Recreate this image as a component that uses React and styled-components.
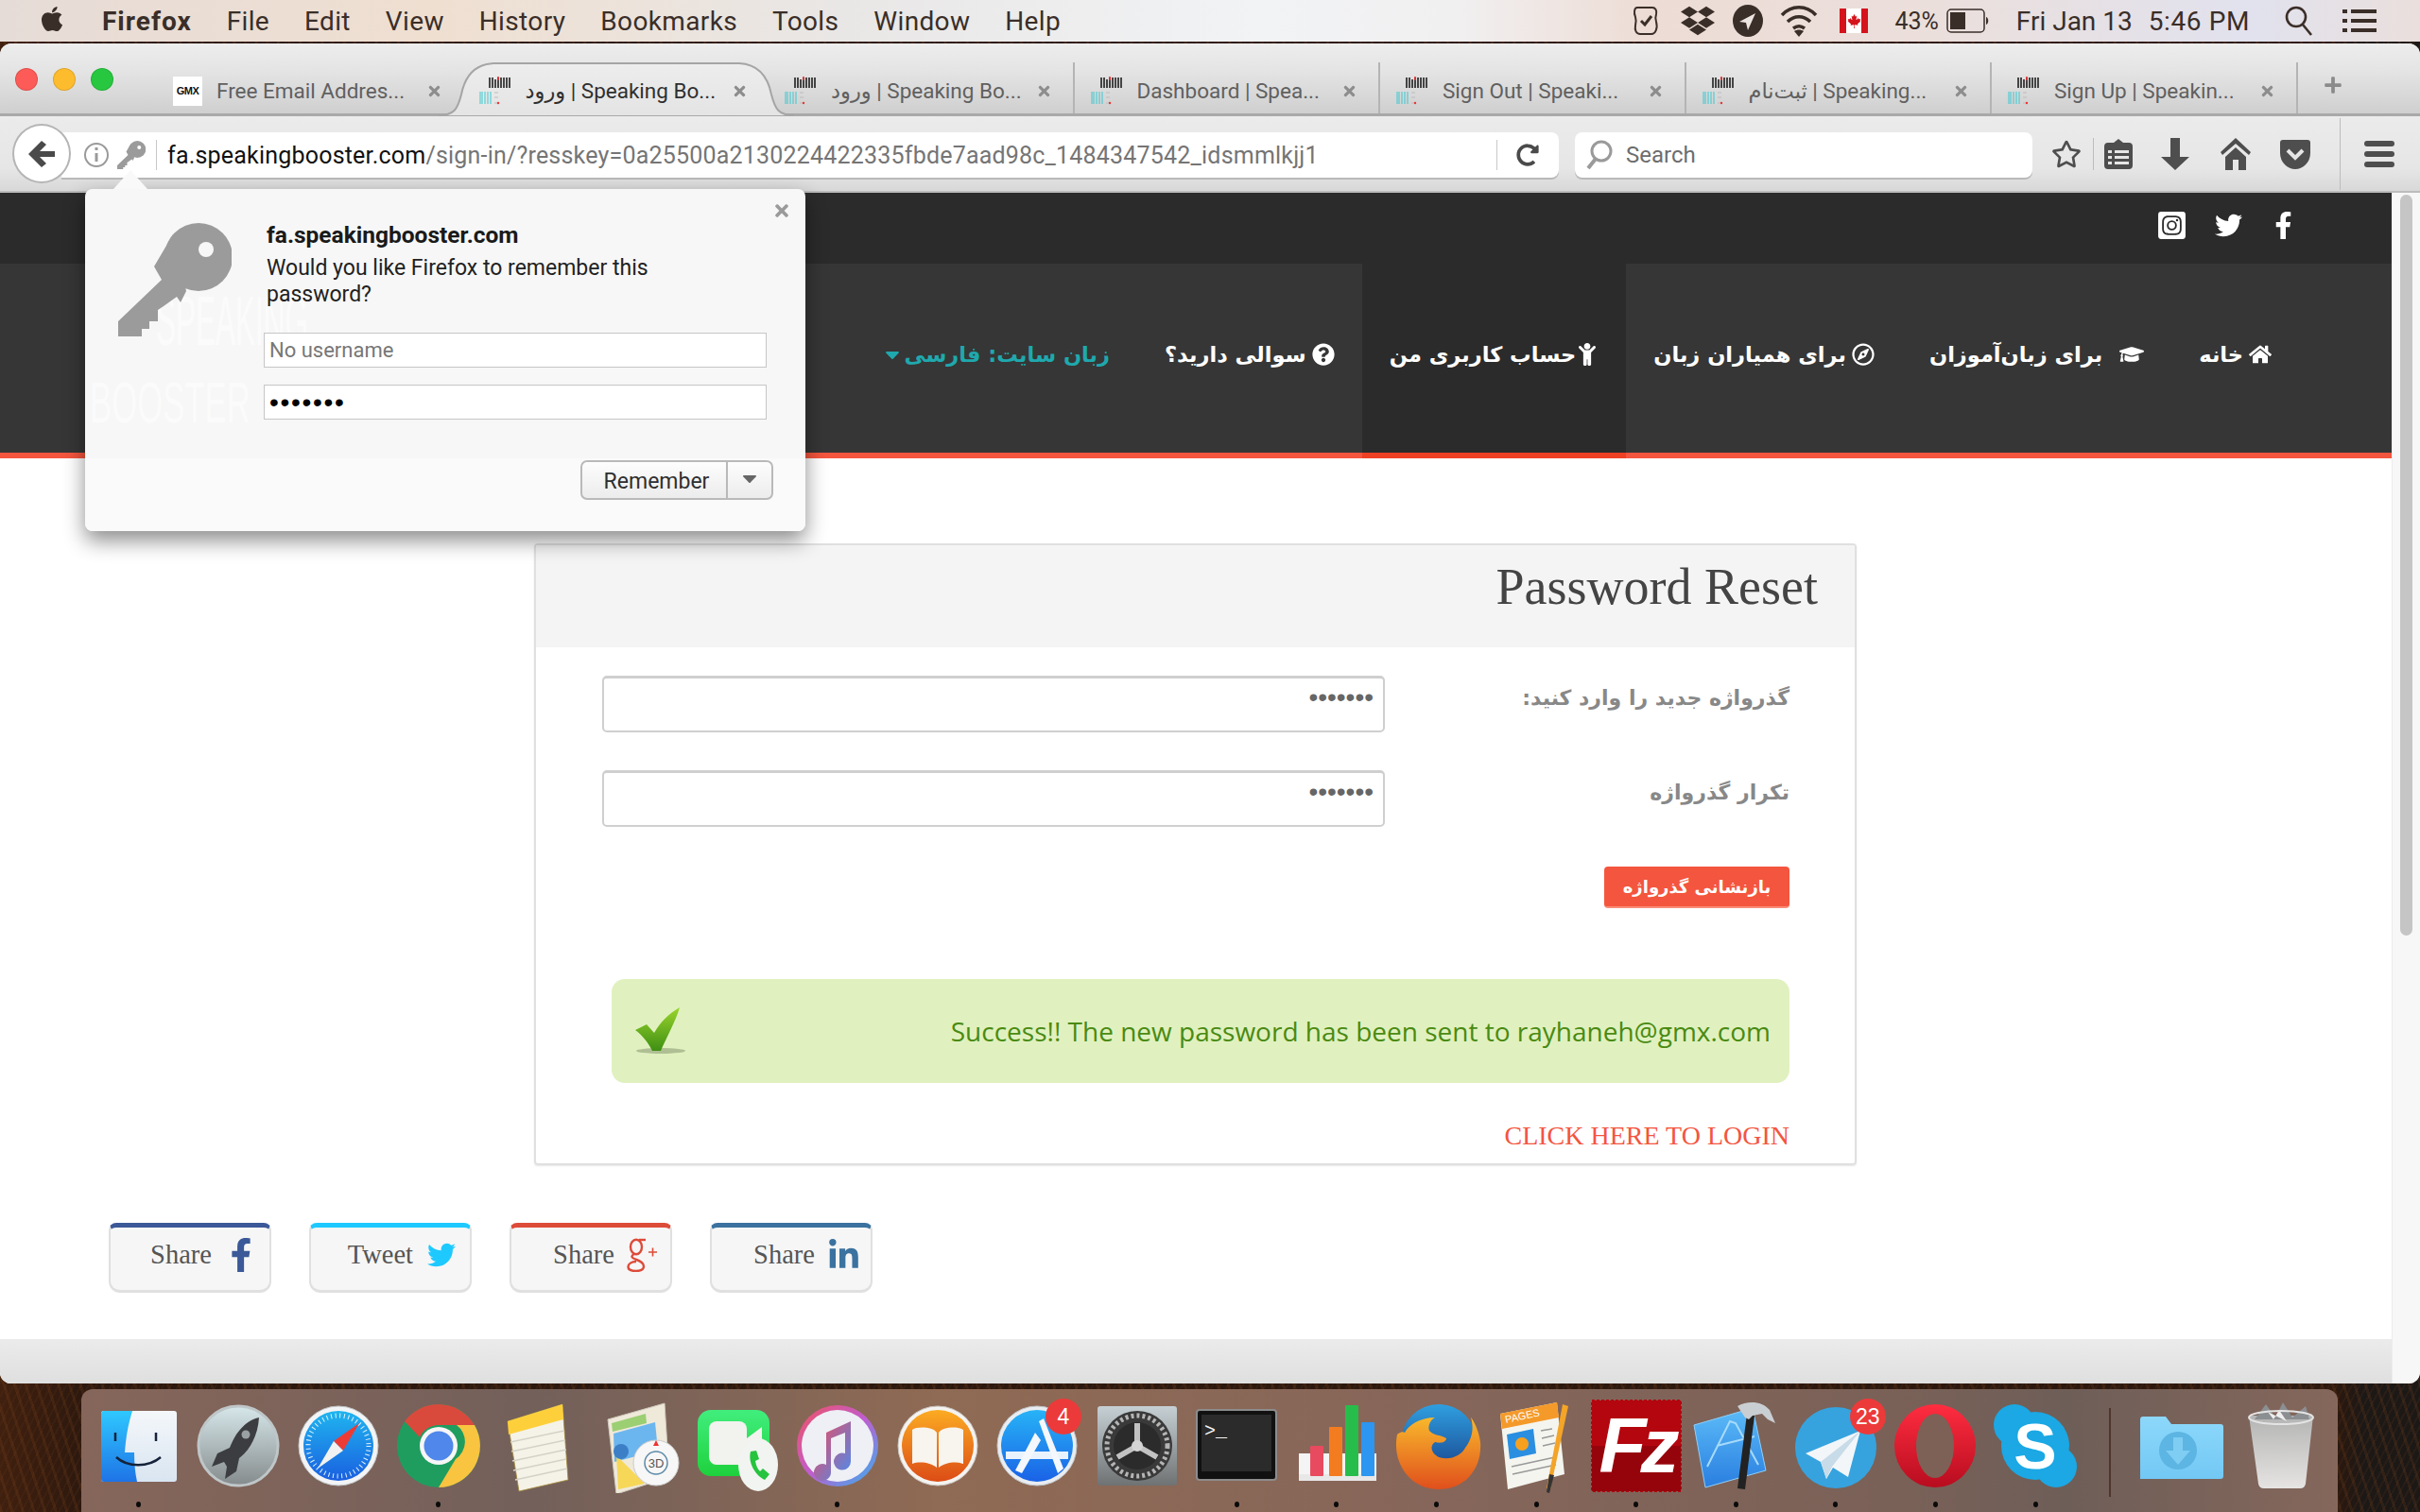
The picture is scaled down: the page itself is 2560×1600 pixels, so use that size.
import React from 'react';
import styled, { createGlobalStyle } from 'styled-components';
import {
  FaApple, FaDropbox, FaCanadianMapleLeaf, FaHome, FaGraduationCap, FaRegCompass, FaChild,
  FaQuestionCircle, FaCaretDown, FaInstagramSquare, FaTwitter, FaFacebookF, FaLinkedinIn,
  FaRegStar, FaRedoAlt, FaTimes, FaPlus,
} from 'react-icons/fa';

const UI_FONT = '"Roboto", "DejaVu Sans", sans-serif';
const FA_FONT = '"DejaVu Sans", sans-serif';
const SERIF = '"Liberation Serif", "DejaVu Serif", serif';

const GlobalStyle = createGlobalStyle`
  html, body { margin: 0; padding: 0; background: #1a1410; }
  * { box-sizing: border-box; }
`;

const Screen = styled.div`
  width: 2560px;
  height: 1600px;
  overflow: hidden;
  display: flex;
  flex-direction: column;
  font-family: ${UI_FONT};
  background:
    repeating-linear-gradient(72deg, rgba(150, 80, 30, 0.16) 0 3px, transparent 3px 11px),
    repeating-linear-gradient(118deg, rgba(90, 50, 25, 0.2) 0 2px, transparent 2px 7px),
    linear-gradient(90deg, #40200f 0, #2c180e 90px, #2c180e 2470px, #1c1816 2500px);
`;

const MenuBar = styled.div`
  height: 44px;
  flex: none;
  display: flex;
  align-items: center;
  padding: 0 46px 0 40px;
  color: #3a2e28;
  font-size: 28px;
  background: linear-gradient(90deg, #e6dcd7 0, #efdfd1 18%, #e9e7e6 35%, #f1f3f5 52%, #f1f0f1 60%, #eddcd5 68%, #ebdfdc 80%, #e1e2ee 93%, #eadfdc 100%);
`;

const MenuItem = styled.span`
  margin-left: ${(p) => p.$ml ?? 37}px;
  font-weight: ${(p) => (p.$bold ? 700 : 400)};
  letter-spacing: ${(p) => (p.$bold ? 1 : 0.35)}px;
`;

const StatusArea = styled.div`
  margin-left: auto;
  display: flex;
  align-items: center;
  height: 100%;
`;

const StatusItem = styled.span`
  display: flex;
  align-items: center;
  margin-left: ${(p) => p.$ml ?? 20}px;
  font-size: ${(p) => p.$size ?? 28}px;
  letter-spacing: ${(p) => p.$track ?? 0}px;
`;

const Flag = styled.span`
  width: 30px;
  height: 26px;
  display: flex;
  align-items: center;
  justify-content: center;
  color: #d5131b;
  font-size: 15px;
  background: linear-gradient(90deg, #d5131b 0 7px, #fff 7px 23px, #d5131b 23px);
`;

const BrowserWindow = styled.div`
  position: relative;
  height: 1418px;
  margin-top: 2px;
  flex: none;
  display: flex;
  flex-direction: column;
  border-radius: 12px;
  overflow: hidden;
  background: #e4e4e4;
`;

const TabStrip = styled.div`
  height: 77px;
  flex: none;
  display: flex;
  align-items: stretch;
  padding: 20px 0 0 166px;
  position: relative;
  background: linear-gradient(#ededed, #e4e4e4 40%, #cfcfcf);
  border-bottom: 3px solid #a9a9a9;
`;

const TrafficLight = styled.span`
  position: absolute;
  top: 26px;
  left: ${(p) => p.$x}px;
  width: 24px;
  height: 24px;
  border-radius: 50%;
  background: ${(p) => p.$color};
  border: 1px solid rgba(0, 0, 0, 0.12);
`;

const Tab = styled.div`
  position: relative;
  width: 323.5px;
  height: 54px;
  flex: none;
  display: flex;
  align-items: center;
  padding: 6px 22px 0 17px;
  gap: 15px;
  font-size: 22.5px;
  color: ${(p) => (p.$active ? '#2f2f2f' : '#606060')};
  border-right: ${(p) => (p.$sep ? '2px solid #b4b4b4' : '0')};
`;

const TabTitle = styled.span`
  flex: 1;
  min-width: 0;
  white-space: nowrap;
  position: relative;
`;

const TabShape = styled.svg`
  position: absolute;
  left: -26px;
  top: 0;
  width: 376px;
  height: 57px;
`;

const TabClose = styled.span`
  position: relative;
  color: #8d8d8d;
  font-size: 17px;
  display: flex;
`;

const GmxIcon = styled.span`
  width: 31px;
  height: 31px;
  flex: none;
  display: flex;
  align-items: center;
  justify-content: center;
  background: #fff;
  color: #111;
  font: 700 11px "Liberation Sans", sans-serif;
  letter-spacing: -0.5px;
`;

const NewTab = styled.span`
  margin-left: 27px;
  display: flex;
  align-items: center;
  color: #8a8a8a;
  font-size: 20px;
  height: 48px;
`;

const NavToolbar = styled.div`
  height: 81px;
  flex: none;
  display: flex;
  align-items: center;
  position: relative;
  padding-left: 65px;
  background: linear-gradient(#ebebeb, #e6e6e6 70%, #d8d8d8);
  border-bottom: 2px solid #bcbcbc;
`;

const BackButton = styled.span`
  position: absolute;
  left: 13px;
  top: 8px;
  width: 62px;
  height: 63px;
  border-radius: 50%;
  background: #fff;
  border: 2px solid #b5b5b5;
  display: flex;
  align-items: center;
  justify-content: center;
  z-index: 1;
`;

const UrlBar = styled.div`
  width: 1584px;
  height: 48px;
  flex: none;
  margin-top: 3px;
  display: flex;
  align-items: center;
  background: #fff;
  border-radius: 0 8px 8px 0;
  box-shadow: 0 2px 0 #b9b9b9;
  padding-left: 23px;
`;

const SearchBar = styled(UrlBar)`
  width: 484px;
  margin-left: 17px;
  border-radius: 8px;
  padding-left: 12px;
  gap: 12px;
  color: #6d6d6d;
  font-size: 24px;
`;

const BarDivider = styled.span`
  width: 1px;
  height: 32px;
  background: #c8c8c8;
  margin-left: ${(p) => p.$l ?? 0}px;
  flex: none;
`;

const UrlSlot = styled.span`
  display: flex;
  margin-left: ${(p) => p.$ml}px;
  color: #4a4a4a;
`;

const UrlText = styled.span`
  font-size: 25px;
  letter-spacing: 0.2px;
  color: #757575;
  margin-left: 11px;
  white-space: nowrap;
  width: 1406px;
  flex: none;

  b {
    font-weight: 400;
    color: #111;
  }
`;

const ToolIcons = styled.div`
  display: flex;
  align-items: center;
  margin-top: 1px;
  color: #4e4e4e;
`;

const ToolIcon = styled.span`
  display: flex;
  margin-left: ${(p) => p.$ml}px;
`;

const ToolDivider = styled.span`
  width: 1px;
  height: ${(p) => p.$h ?? 34}px;
  margin-left: ${(p) => p.$ml}px;
  background: #bcbcbc;
`;

const PageArea = styled.div`
  flex: 1;
  min-height: 0;
  display: flex;
`;

const Page = styled.div`
  flex: 1;
  min-width: 0;
  display: flex;
  flex-direction: column;
  background: #fff;
`;

const Scrollbar = styled.div`
  width: 30px;
  flex: none;
  padding: 2px 8px 0;
  background: #f7f7f7;
  border-left: 1px solid #ececec;
`;

const ScrollThumb = styled.div`
  height: 784px;
  background: #c5c5c5;
  border-radius: 8px;
`;

const TopBar = styled.div`
  height: 75px;
  flex: none;
  display: flex;
  align-items: center;
  justify-content: flex-end;
  gap: 29px;
  padding: 0 100px 6px 0;
  background: #2b2b2b;
  color: #fff;
  font-size: 29px;
`;

const SiteNav = styled.nav`
  height: 206px;
  flex: none;
  direction: rtl;
  display: flex;
  padding-right: 98px;
  background: #363636;
  border-bottom: 6px solid #f4553e;
`;

const NavItem = styled.a`
  height: 206px;
  display: flex;
  align-items: center;
  gap: ${(p) => p.$gap ?? 6}px;
  padding: 0 29px 8px;
  color: ${(p) => (p.$accent ? '#1fa8ad' : '#fff')};
  font: 700 22.5px ${FA_FONT};
  white-space: nowrap;
  background: ${(p) => (p.$active ? '#2b2b2b' : 'transparent')};
  border-bottom: 6px solid ${(p) => (p.$active ? '#ee4023' : 'transparent')};
`;

const Main = styled.main`
  flex: 1;
  min-height: 0;
`;

const Card = styled.section`
  width: 1399px;
  margin: 90px 0 61px 565px;
  height: 658px;
  border: 2px solid #e0e0e0;
  border-radius: 4px;
  box-shadow: 0 1px 2px rgba(0, 0, 0, 0.1);
  overflow: hidden;
`;

const CardHeader = styled.header`
  height: 108px;
  padding: 13px 39px 0 0;
  text-align: right;
  background: #f4f4f4;
`;

const CardTitle = styled.h2`
  margin: 0;
  font: 400 54px ${SERIF};
  color: #444;
`;

const CardBody = styled.div`
  padding: 30px 69px 0 70px;
  display: flex;
  flex-direction: column;
  align-items: flex-end;
`;

const FieldRow = styled.div`
  width: 100%;
  display: flex;
  justify-content: space-between;
  margin-bottom: 40px;
`;

const FieldInput = styled.input`
  width: 828px;
  height: 60px;
  padding: 0 10px 16px;
  border: 2px solid #cfcfcf;
  border-top-width: 3px;
  border-radius: 5px;
  direction: rtl;
  color: #666;
  font: 28px "Liberation Sans", sans-serif;
  outline: none;
`;

const FieldLabel = styled.label`
  font: 700 22px ${FA_FONT};
  color: #888;
  direction: rtl;
  padding-top: 11px;
`;

const SubmitButton = styled.button`
  width: 196px;
  height: 44px;
  margin-top: 2px;
  padding: 0;
  border: 0;
  border-bottom: 2px solid #fa8a78;
  border-radius: 4px;
  background: #f4553e;
  color: #fff;
  font: 700 18px ${FA_FONT};
  direction: rtl;
`;

const SuccessBox = styled.div`
  width: 1246px;
  height: 110px;
  margin-top: 75px;
  display: flex;
  align-items: center;
  justify-content: space-between;
  padding: 0 20px 0 24px;
  background: #e0f1bf;
  border-radius: 14px;
  color: #4a8a12;
  font: 400 28px "Open Sans", sans-serif;
`;

const LoginLink = styled.a`
  margin-top: 40px;
  font: 400 28px ${SERIF};
  color: #f4553e;
`;

const ShareRow = styled.div`
  display: flex;
  gap: 40px;
  padding-left: 115px;
`;

const ShareButton = styled.a`
  width: 172px;
  height: 74px;
  display: flex;
  align-items: center;
  justify-content: flex-end;
  gap: ${(p) => p.$gap}px;
  padding: 0 ${(p) => p.$pr}px 8px 0;
  background: #f6f6f6;
  border: 2px solid #e0e0e0;
  border-top: 5px solid ${(p) => p.$color};
  border-bottom-width: 3px;
  border-radius: 8px 8px 12px 12px;
  color: #555;
  font: 400 28.5px ${SERIF};

  svg {
    color: ${(p) => p.$color};
    font-size: ${(p) => p.$icon ?? 36}px;
  }
`;

const PageFooter = styled.footer`
  height: 47px;
  flex: none;
  background: linear-gradient(#ebebeb, #dfdfdf);
`;

const Popup = styled.div`
  position: absolute;
  left: 90px;
  top: 154px;
  width: 762px;
  height: 362px;
  z-index: 5;
  padding: 34px 35px 0;
  display: flex;
  background: linear-gradient(#f7f7f7 0 285px, #fafafa 285px);
  border-radius: 8px;
  box-shadow: 0 10px 22px rgba(0, 0, 0, 0.45);
  font-family: ${UI_FONT};

  &::before {
    content: '';
    position: absolute;
    left: 30px;
    top: -20px;
    border: 18px solid transparent;
    border-top: 0;
    border-bottom: 20px solid #f9f9f9;
  }
`;

const PopupClose = styled.span`
  position: absolute;
  right: 15px;
  top: 13px;
  color: #9a9a9a;
  font-size: 20px;
  display: flex;
`;

const GhostLogo = styled.span`
  position: absolute;
  left: ${(p) => p.$x}px;
  top: ${(p) => p.$y}px;
  font: 400 ${(p) => p.$size}px "Liberation Sans", sans-serif;
  color: #fbfbfb;
  line-height: 1;
  transform: scaleX(${(p) => p.$sx});
  transform-origin: left top;
`;

const KeyColumn = styled.div`
  position: relative;
  width: 154px;
  flex: none;
  padding-top: 2px;
`;

const PopupContent = styled.div`
  flex: 1;
  position: relative;
  display: flex;
  flex-direction: column;
`;

const PopupHost = styled.div`
  padding-left: 3px;
  font-size: 24.5px;
  font-weight: 700;
  line-height: 30px;
  color: #1a1a1a;
`;

const PopupMessage = styled.div`
  width: 440px;
  padding: 6px 0 0 3px;
  font-size: 23px;
  line-height: 28px;
  color: #222;
  height: 88px;
`;

const PopupInput = styled.input`
  width: 532px;
  height: 37px;
  flex: none;
  margin-bottom: 18px;
  padding: 0 5px;
  border: 1.5px solid #c6c6c6;
  background: #fff;
  font: 22px ${UI_FONT};
  color: #111;
  outline: none;

  &[type='password'] {
    font: 28px "Liberation Sans", sans-serif;
    letter-spacing: 1.7px;
    color: #000;
  }

  &::placeholder {
    color: #777;
    opacity: 1;
  }
`;

const RememberSplit = styled.div`
  align-self: flex-end;
  margin: 25px -1px 0 0;
  width: 204px;
  height: 42px;
  display: flex;
  border: 2px solid #b9b9b9;
  border-radius: 7px;
  background: linear-gradient(#fdfdfd, #ececec);
  font-size: 23px;
  color: #2f2f2f;
`;

const RememberLabel = styled.span`
  flex: 1;
  display: flex;
  align-items: center;
  justify-content: center;
  padding: 2px 0 0 5px;
  border-right: 2px solid #b9b9b9;
`;

const RememberArrow = styled.span`
  width: 46px;
  display: flex;
  justify-content: center;
  padding-top: 5px;
  color: #666;
  font-size: 24px;
`;

const Dock = styled.div`
  width: 2387px;
  height: 130px;
  margin: 6px 0 0 86px;
  flex: none;
  display: flex;
  align-items: flex-start;
  padding: 10px 0 0 8px;
  border-radius: 12px 12px 0 0;
  background: linear-gradient(90deg, #86665a 0, #73605a 20%, #8f6a54 38%, #86665a 60%, #7a6157 80%, #6e5e58 88%, #85675b 100%);
`;

const DockCell = styled.div`
  position: relative;
  width: 105.6px;
  flex: none;
  display: flex;
  flex-direction: column;
  align-items: center;

  svg {
    display: block;
  }
`;

const DockDot = styled.span`
  width: 5px;
  height: 6px;
  margin-top: 9px;
  border-radius: 50%;
  background: ${(p) => (p.$on ? '#0a0a0a' : 'transparent')};
`;

const DockBadge = styled.span`
  position: absolute;
  top: ${(p) => p.$top}px;
  right: ${(p) => p.$right}px;
  width: 38px;
  height: 38px;
  display: flex;
  align-items: center;
  justify-content: center;
  border-radius: 50%;
  background: #ec3a3a;
  color: #fff;
  font: 400 23px "Liberation Sans", sans-serif;
`;

const DockDivider = styled.span`
  width: 2px;
  height: 94px;
  margin: 10px 22px 0 25px;
  background: #4e362b;
  flex: none;
`;

function KeyIcon({ size, hole = '#f7f7f7' }) {
  return (
    <svg width={size} height={size} viewBox="0 0 120 120">
      <g fill="#9b9b9b">
        <ellipse cx="85" cy="36" rx="36" ry="36" />
        <path d="M58 12 L38 46 L46 60 L0 104 L0 120 L25 120 L25 112 L33 112 L33 104 L42 104 L42 92 L48 88 L62 78 L66 84 L72 72 Z" />
      </g>
      <circle cx="93" cy="28" r="8" fill={hole} />
    </svg>
  );
}

function SiteFavicon() {
  return (
    <svg width="34" height="30" viewBox="0 0 34 30" style={{ flex: 'none', position: 'relative' }}>
      <path d="M11 1v11M14 1v11M17 3v9M20 1v11M23 1v11M26 1v11M29 1v11M32 1v11" stroke="#111" strokeWidth="1.5" />
      <path d="M20 0v4" stroke="#e33" strokeWidth="1.6" />
      <path d="M1 16v13M3 16v13M6 16v13M9 16v13M12 16v13" stroke="#26c6cf" strokeWidth="0.9" fill="none" />
      <path d="M16 17h4M16 22h4M16 28h3" stroke="#bbb" strokeWidth="1.2" />
      <circle cx="20" cy="28" r="1.2" fill="#e33" />
    </svg>
  );
}

function GooglePlusIcon() {
  return (
    <svg width="32" height="36" viewBox="0 0 32 36" fill="none" stroke="currentColor" strokeWidth="2.4">
      <ellipse cx="10" cy="9.5" rx="6" ry="7.8" />
      <path d="M13 2h7" />
      <path d="M8 17c-4 2-3 4 1 5.500 6 2 9 4 9 7.500 0 4-4 5-8.500 5S1.500 33.500 1.500 30.500 5 25 10 25" />
      <path d="M23 15h9M27.500 10.500v9" strokeWidth="1.6" />
    </svg>
  );
}

function AppIcon({ children }) {
  return (
    <svg width="100" height="100" viewBox="0 0 100 100">
      {children}
    </svg>
  );
}

const grad = (id, a, b) => (
  <linearGradient id={id} x1="0" y1="0" x2="0" y2="1">
    <stop offset="0" stopColor={a} />
    <stop offset="1" stopColor={b} />
  </linearGradient>
);

const dockApps = [
  {
    name: 'Finder', dot: true,
    art: (
      <>
        <defs>{grad('fi1', '#2fc8ff', '#1e74e6')}{grad('fi2', '#f4f7fa', '#d9e5f1')}</defs>
        <rect x="10" y="13" width="80" height="75" rx="3" fill="url(#fi2)" />
        <path d="M13 13h30c-5 16-7 30-8 44h10c0 12 1 22 3 31H13a3 3 0 0 1-3-3V16a3 3 0 0 1 3-3z" fill="url(#fi1)" />
        <path d="M25 36v9M68 36v9" stroke="#15233a" strokeWidth="2.5" />
        <path d="M26 62c12 11 34 11 47 0" fill="none" stroke="#15233a" strokeWidth="2.5" />
      </>
    ),
  },
  {
    name: 'Launchpad',
    art: (
      <>
        <defs>{grad('lp1', '#d6e7ea', '#858b8c')}</defs>
        <circle cx="50" cy="50" r="42" fill="url(#lp1)" stroke="#bfc6c8" strokeWidth="3" />
        <path d="M72 20c-14 3-25 16-31 32l-13 6-6 14 13-5 3 5-2 13 12-8 3-14c12-9 20-25 21-43z" fill="#3c3d40" />
        <circle cx="58" cy="38" r="4.5" fill="#9aa1a3" />
      </>
    ),
  },
  {
    name: 'Safari',
    art: (
      <>
        <defs>{grad('sa1', '#1fb5ef', '#1a5fe0')}</defs>
        <circle cx="50" cy="50" r="42" fill="#f2f4f6" stroke="#c4c6c8" />
        <circle cx="50" cy="50" r="37" fill="url(#sa1)" />
        <circle cx="50" cy="50" r="32" fill="none" stroke="#dff2fc" strokeWidth="5" strokeDasharray="1 3.6" />
        <path d="M72 26L45 45 55 55z" fill="#ec3b35" />
        <path d="M28 74L55 55 45 45z" fill="#f2f2f2" />
      </>
    ),
  },
  {
    name: 'Chrome', dot: true,
    art: (
      <>
        <circle cx="50" cy="50" r="44" fill="#1f9d5f" />
        <path d="M50 6a44 44 0 0 1 38 22H50a22 22 0 0 0-20 13L14 24A44 44 0 0 1 50 6z" fill="#d94a3d" />
        <path d="M88 28a44 44 0 0 1-38 66l18-30a22 22 0 0 0 1-36z" fill="#f9c440" />
        <circle cx="50" cy="50" r="20" fill="#f6f6f6" />
        <circle cx="50" cy="50" r="15.5" fill="#4f87ea" />
      </>
    ),
  },
  {
    name: 'Notes',
    art: (
      <>
        <path d="M18 24L76 6l6 80-52 12z" fill="#f5f3e8" stroke="#a58a3a" strokeWidth="0.8" />
        <path d="M18 24L76 6l1 16-58 16z" fill="#fdd03b" />
        <path d="M21 46l57-12M22 56l57-12M23 66l57-12M24 76l56-12M26 86l55-12" stroke="#d4d2c6" strokeWidth="1.5" />
      </>
    ),
  },
  {
    name: 'Maps',
    art: (
      <>
        <path d="M18 22L78 5l5 78-56 18z" fill="#efe9da" stroke="#cfc9bc" />
        <path d="M22 26l36-10 1 10-36 9z" fill="#9bcf72" />
        <path d="M24 37l44-12 3 30-46 12z" fill="#6cb6ef" />
        <path d="M27 60l30 30-28 6z" fill="#f7d757" />
        <circle cx="32" cy="56" r="8" fill="#3d7fc6" />
        <circle cx="69" cy="68" r="24" fill="#f7f7f7" stroke="#ccc" />
        <circle cx="69" cy="68" r="12" fill="none" stroke="#5e8aa8" strokeWidth="1.5" />
        <text x="69" y="73" fontSize="13" textAnchor="middle" fontFamily="Liberation Sans" fill="#555">3D</text>
        <path d="M69 44l3 6h-6z" fill="#e33" />
      </>
    ),
  },
  {
    name: 'FaceTime',
    art: (
      <>
        <defs>{grad('ft1', '#41ee7d', '#1ed13c')}</defs>
        <rect x="8" y="12" width="76" height="70" rx="14" fill="url(#ft1)" />
        <rect x="20" y="24" width="40" height="46" rx="8" fill="#f2f2ee" />
        <path d="M60 42l16-12v34L60 52z" fill="#f2f2ee" />
        <ellipse cx="72" cy="70" rx="21" ry="28" fill="#f1f4f1" />
        <path d="M64 56c-3 12 5 25 15 30l5-6-7-6-3 3c-3-3-4-6-5-11l4-2-3-9z" fill="#25c33e" />
      </>
    ),
  },
  {
    name: 'iTunes', dot: true,
    art: (
      <>
        <defs>
          <linearGradient id="it1" x1="0" y1="0" x2="1" y2="1">
            <stop offset="0" stopColor="#f0525f" />
            <stop offset="0.5" stopColor="#c05dd0" />
            <stop offset="1" stopColor="#2fb5f0" />
          </linearGradient>
          <linearGradient id="it2" x1="0" y1="0" x2="1" y2="1">
            <stop offset="0" stopColor="#f2495d" />
            <stop offset="1" stopColor="#4a8df0" />
          </linearGradient>
        </defs>
        <circle cx="50" cy="50" r="43" fill="url(#it1)" />
        <circle cx="50" cy="50" r="38" fill="#eef0f5" />
        <path d="M38 36l26-12v42a9 9 0 1 1-6-8V36l-15 6v36a9 9 0 1 1-5-8z" fill="url(#it2)" />
      </>
    ),
  },
  {
    name: 'iBooks',
    art: (
      <>
        <defs>{grad('ib1', '#fbab22', '#dc4c16')}</defs>
        <circle cx="50" cy="50" r="42" fill="#f5f3f0" stroke="#c9c5c0" />
        <circle cx="50" cy="50" r="38" fill="url(#ib1)" />
        <path d="M49 36c-4-6-20-7-26-3v36c8-3 20-1 26 4zM51 36c4-6 20-7 26-3v36c-8-3-20-1-26 4z" fill="#f8f4ee" />
      </>
    ),
  },
  {
    name: 'App Store',
    badge: { text: '4', top: 0, right: 6 },
    art: (
      <>
        <defs>{grad('as1', '#27b3f7', '#1a62e6')}</defs>
        <circle cx="50" cy="50" r="42" fill="#e9edf1" stroke="#c2c6ca" />
        <circle cx="50" cy="50" r="38" fill="url(#as1)" />
        <path d="M17 56h66v8H17z" fill="#fff" opacity="0.9" />
        <path d="M52 24l5-3 21 53-6 5zM48 36l6 8-20 35-7-3z" fill="#f4f7fb" />
      </>
    ),
  },
  {
    name: 'System Preferences',
    art: (
      <>
        <defs>{grad('sp1', '#c6d0d4', '#6f7273')}</defs>
        <rect x="8" y="8" width="84" height="84" rx="3" fill="url(#sp1)" />
        <circle cx="50" cy="50" r="37" fill="#3a3a3a" />
        <circle cx="50" cy="50" r="32" fill="none" stroke="#b5b5b5" strokeWidth="5" strokeDasharray="3 3" />
        <circle cx="50" cy="50" r="25" fill="#2b2b2b" />
        <path d="M50 50V26M50 50L29 62M50 50l21 12" stroke="#c2c2c2" strokeWidth="6" />
        <circle cx="50" cy="50" r="6" fill="#d4d4d4" />
      </>
    ),
  },
  {
    name: 'Terminal', dot: true,
    art: (
      <>
        <rect x="8" y="12" width="84" height="74" rx="3" fill="#111" stroke="#8c8c8c" strokeWidth="2" />
        <rect x="13" y="17" width="74" height="60" fill="#2b2b2b" />
        <text x="16" y="40" fontSize="20" fontFamily="Liberation Mono" fill="#f2f2f2">{'>_'}</text>
      </>
    ),
  },
  {
    name: 'Numbers', dot: true,
    art: (
      <>
        <path d="M10 78h82v9H10z" fill="#e8e8e8" />
        <path d="M10 58h82v22H10z" fill="#f4f4f4" />
        <rect x="22" y="50" width="14" height="32" rx="1" fill="#e84a5f" />
        <rect x="42" y="30" width="14" height="52" rx="1" fill="#f47c20" />
        <rect x="59" y="7" width="14" height="75" rx="1" fill="#27bd4a" />
        <rect x="76" y="25" width="14" height="57" rx="1" fill="#2c96f0" />
      </>
    ),
  },
  {
    name: 'Firefox', dot: true,
    art: (
      <>
        <defs>
          {grad('ff1', '#2f9fe0', '#173c86')}
          {grad('ff2', '#f8b82c', '#e04f1c')}
        </defs>
        <circle cx="52" cy="46" r="40" fill="url(#ff1)" />
        <path d="M8 38c-6 30 14 58 44 58 28 0 46-22 44-50-2-14-8-24-10-26 4 14 0 24-6 32-4 8-16 14-28 10-8-4-10-12-4-16 6 2 12 0 12-4-6-4-12-2-18-8-2-6 2-12 6-14-16 0-28 8-32 16-2-2-6 0-8 2z" fill="url(#ff2)" />
      </>
    ),
  },
  {
    name: 'Pages', dot: true,
    art: (
      <>
        <path d="M12 16L72 4l8 76-60 16z" fill="#f5f5f0" />
        <path d="M12 16L72 4l2 16-60 12z" fill="#f49a2a" />
        <text x="18" y="26" fontSize="11" fill="#fff" fontFamily="Liberation Sans" transform="rotate(-12 18 26)">PAGES</text>
        <path d="M19 38l28-6 3 26-28 6z" fill="#2a8fe0" />
        <circle cx="35" cy="48" r="7" fill="#f6a020" />
        <path d="M55 34l12-2M56 42l13-3M57 50l13-3M24 72l46-10M25 80l46-10" stroke="#999" strokeWidth="1.5" />
        <path d="M78 6l6 2-19 88-4-1z" fill="#f4a427" />
        <path d="M64 80l5 1-5 19-3-1z" fill="#333" />
      </>
    ),
  },
  {
    name: 'FileZilla', dot: true,
    art: (
      <>
        <rect x="3" y="2" width="94" height="96" fill="#b3060e" stroke="#b3060e" strokeWidth="2" strokeDasharray="3 2" />
        <rect x="3" y="50" width="94" height="48" fill="#96040b" />
        <text x="50" y="78" fontSize="82" fontWeight="700" fontStyle="italic" textAnchor="middle" fill="#fff" fontFamily="Liberation Sans" letterSpacing="-6">Fz</text>
      </>
    ),
  },
  {
    name: 'Xcode', dot: true,
    art: (
      <>
        <defs>{grad('xc1', '#5cbcf8', '#2a7ee0')}</defs>
        <path d="M6 28L68 10l14 66-64 18z" fill="url(#xc1)" stroke="#8ed0fa" />
        <path d="M20 72L44 24l6 2 24 44M30 50l40-10" fill="none" stroke="#a7daf9" strokeWidth="2" />
        <path d="M62 16l8 2-10 78-8-1z" fill="#222" />
        <path d="M52 8c10-6 26-6 34 4l6 14-8-4-6-6-10 2-4 4-4-2z" fill="#c9ced2" />
      </>
    ),
  },
  {
    name: 'Telegram', dot: true,
    badge: { text: '23', top: 0, right: 0 },
    art: (
      <>
        <circle cx="50" cy="52" r="43" fill="#36a3de" />
        <path d="M76 34L18 58l16 9 6 18 7-12 16 10z" fill="#f2f6f9" />
        <path d="M34 67l42-33-30 38-6 13z" fill="#c8dbe8" />
      </>
    ),
  },
  {
    name: 'Opera', dot: true,
    art: (
      <>
        <defs>{grad('op1', '#ff2d40', '#b80c1f')}</defs>
        <ellipse cx="50" cy="50" rx="43" ry="44" fill="url(#op1)" />
        <ellipse cx="50" cy="50" rx="20" ry="34" fill="#7d6156" />
      </>
    ),
  },
  {
    name: 'Skype', dot: true,
    art: (
      <>
        <circle cx="50" cy="50" r="36" fill="#1ba8e4" />
        <circle cx="28" cy="28" r="22" fill="#1ba8e4" />
        <circle cx="72" cy="72" r="22" fill="#1ba8e4" />
        <text x="50" y="74" fontSize="68" fontWeight="700" textAnchor="middle" fill="#fff" fontFamily="Liberation Sans">S</text>
      </>
    ),
  },
];

const dockFolders = [
  {
    name: 'Downloads',
    art: (
      <>
        <defs>{grad('dl1', '#8dd8fb', '#72c8f4')}</defs>
        <path d="M6 22a3 3 0 0 1 3-3h24l6 8h52a3 3 0 0 1 3 3v52a3 3 0 0 1-3 3H6z" fill="url(#dl1)" />
        <circle cx="46" cy="55" r="20" fill="#5cb5e2" />
        <path d="M41 41h10v14h8L46 70 33 55h8z" fill="#7fcdf3" />
      </>
    ),
  },
  {
    name: 'Trash',
    art: (
      <>
        <defs>{grad('tr1', '#b9bdbd', '#f2f2f2')}</defs>
        <path d="M16 18h68l-8 72a6 6 0 0 1-6 5H32a6 6 0 0 1-6-5z" fill="url(#tr1)" opacity="0.9" />
        <path d="M22 22l12-16 10 14 8-16 10 16 14-12 4 14z" fill="#8c8f92" />
        <path d="M36 14l6 8 6-10 8 12z" fill="#eee" />
        <ellipse cx="50" cy="20" rx="34" ry="7" fill="none" stroke="#e4e4e4" strokeWidth="2" />
      </>
    ),
  },
];

const tabs = [
  { title: 'Free Email Addres...', gmx: true },
  { title: 'ورود | Speaking Bo...', active: true },
  { title: 'ورود | Speaking Bo...', sep: true },
  { title: 'Dashboard | Spea...', sep: true },
  { title: 'Sign Out | Speaki...', sep: true },
  { title: 'ثبت‌نام | Speaking...', sep: true },
  { title: 'Sign Up | Speakin...', sep: true },
];

function DockItem({ app }) {
  return (
    <DockCell>
      <AppIcon>{app.art}</AppIcon>
      <DockDot $on={app.dot} />
      {app.badge && (
        <DockBadge $top={app.badge.top} $right={app.badge.right}>{app.badge.text}</DockBadge>
      )}
    </DockCell>
  );
}

export default function App() {
  return (
    <Screen>
      <GlobalStyle />
      <MenuBar>
        <FaApple size={30} style={{ marginTop: -4 }} />
        <MenuItem $bold $ml={38}>Firefox</MenuItem>
        {['File', 'Edit', 'View', 'History', 'Bookmarks', 'Tools', 'Window', 'Help'].map((m) => (
          <MenuItem key={m}>{m}</MenuItem>
        ))}
        <StatusArea>
          <StatusItem>
            <svg width="28" height="34" viewBox="0 0 28 34" fill="none" stroke="#3a2e28" strokeWidth="2">
              <path d="M5 3h16c3 0 5 3 4 7-1 3-1 5 0 8 2 7-1 13-5 13H8c-4 0-6-4-5-9 1-4 1-6 0-9C1 8 2 3 5 3z" />
              <path d="M9 17l4 4 7-9" strokeWidth="3" />
            </svg>
          </StatusItem>
          <StatusItem $ml={23}><FaDropbox size={36} /></StatusItem>
          <StatusItem $ml={19}>
            <svg width="32" height="34" viewBox="0 0 32 34">
              <ellipse cx="16" cy="17" rx="16" ry="17" fill="#3a2e28" />
              <path d="M24 9L7 18l7 1 2 8z" fill="#ece4e0" />
            </svg>
          </StatusItem>
          <StatusItem $ml={18}>
            <svg width="40" height="36" viewBox="0 0 40 36" fill="none" stroke="#3a2e28" strokeWidth="3.5">
              <path d="M2 12c10-11 26-11 36 0M8 19c7-7 17-7 24 0M14 26c4-3 8-3 12 0" />
              <path d="M20 35l-5-6c3-2 7-2 10 0z" fill="#3a2e28" stroke="none" />
            </svg>
          </StatusItem>
          <StatusItem $ml={23}><Flag><FaCanadianMapleLeaf /></Flag></StatusItem>
          <StatusItem $ml={28} $size={25}>43%</StatusItem>
          <StatusItem $ml={8}>
            <svg width="46" height="26" viewBox="0 0 46 26">
              <rect x="1" y="1" width="39" height="24" rx="4" fill="none" stroke="#3a2e28" strokeWidth="1.5" />
              <rect x="4" y="4" width="16" height="18" fill="#3a2e28" />
              <path d="M42 9c3 1 3 7 0 8z" fill="#3a2e28" />
            </svg>
          </StatusItem>
          <StatusItem $ml={28}>Fri Jan 13</StatusItem>
          <StatusItem $ml={17} $track={0.6}>5:46 PM</StatusItem>
          <StatusItem $ml={37}>
            <svg width="30" height="32" viewBox="0 0 30 32" fill="none" stroke="#3a2e28" strokeWidth="2.6">
              <circle cx="12" cy="12" r="10" />
              <path d="M19 20l9 11" />
            </svg>
          </StatusItem>
          <StatusItem $ml={31}>
            <svg width="36" height="24" viewBox="0 0 36 24" fill="#3a2e28">
              <path d="M0 0h5v4H0zM0 10h5v4H0zM0 20h5v4H0zM9 0h27v4H9zM9 10h27v4H9zM9 20h27v4H9z" />
            </svg>
          </StatusItem>
        </StatusArea>
      </MenuBar>

      <BrowserWindow>
        <TabStrip>
          <TrafficLight $x={16} $color="#fc5b57" />
          <TrafficLight $x={56} $color="#fdbc2e" />
          <TrafficLight $x={96} $color="#27c83f" />
          {tabs.map((t, i) => (
            <Tab key={i} $active={t.active} $sep={t.sep}>
              {t.active && (
                <TabShape viewBox="0 0 376 57" preserveAspectRatio="none">
                  <defs>
                    <linearGradient id="activeTab" x1="0" y1="0" x2="0" y2="1">
                      <stop offset="0" stopColor="#ededed" />
                      <stop offset="1" stopColor="#e4e4e4" />
                    </linearGradient>
                  </defs>
                  <path
                    d="M0 56C16 56 20 50 24 34 28 14 38 2 58 1H318C338 2 348 14 352 34 356 50 360 56 376 56"
                    fill="url(#activeTab)"
                    stroke="#a5a5a5"
                    strokeWidth="2"
                  />
                </TabShape>
              )}
              {t.gmx ? <GmxIcon>GMX</GmxIcon> : <SiteFavicon />}
              <TabTitle>{t.title}</TabTitle>
              <TabClose><FaTimes /></TabClose>
            </Tab>
          ))}
          <NewTab><FaPlus /></NewTab>
        </TabStrip>

        <NavToolbar>
          <BackButton>
            <svg width="32" height="32" viewBox="0 0 32 32" fill="#4a4a4a">
              <path d="M16 2l5 4-7 7h16v6H14l7 7-5 4L2 16z" />
            </svg>
          </BackButton>
          <UrlBar>
            <svg width="28" height="28" viewBox="0 0 28 28" fill="none" stroke="#9a9a9a" strokeWidth="2">
              <circle cx="14" cy="14" r="12" />
              <path d="M14 12v9" strokeWidth="3" />
              <path d="M14 6v3" strokeWidth="3" />
            </svg>
            <UrlSlot $ml={8}><KeyIcon size={30} hole="#fff" /></UrlSlot>
            <BarDivider $l={11} />
            <UrlText><b>fa.speakingbooster.com</b>/sign-in/?resskey=0a25500a2130224422335fbde7aad98c_1484347542_idsmmlkjj1</UrlText>
            <BarDivider />
            <UrlSlot $ml={20}><FaRedoAlt size={24} /></UrlSlot>
          </UrlBar>
          <SearchBar>
            <svg width="30" height="32" viewBox="0 0 30 32" fill="none" stroke="#9a9a9a" strokeWidth="3">
              <circle cx="16" cy="12" r="10" />
              <path d="M10 20l-8 10" strokeWidth="4" />
            </svg>
            <span>Search</span>
          </SearchBar>
          <ToolIcons>
            <ToolIcon $ml={20}><FaRegStar size={32} /></ToolIcon>
            <ToolDivider $ml={12} />
            <ToolIcon $ml={11}>
              <svg width="30" height="32" viewBox="0 0 30 32" fill="#4e4e4e">
                <path d="M10 4l5-4 5 4h6a4 4 0 0 1 4 4v20a4 4 0 0 1-4 4H4a4 4 0 0 1-4-4V8a4 4 0 0 1 4-4z" />
                <path d="M4 12h4v3H4zM4 18h4v3H4zM4 24h4v3H4zM11 12h15v3H11zM11 18h15v3H11zM11 24h15v3H11z" fill="#e6e6e6" />
              </svg>
            </ToolIcon>
            <ToolIcon $ml={30}>
              <svg width="30" height="34" viewBox="0 0 30 34" fill="#4e4e4e">
                <path d="M10 0h10v20h10L15 34 0 20h10z" />
              </svg>
            </ToolIcon>
            <ToolIcon $ml={33}>
              <svg width="32" height="34" viewBox="0 0 32 34" fill="#4e4e4e">
                <path d="M16 0l16 15-2 3L16 6 2 18l-2-3z" />
                <path d="M16 10l11 10v14h-8V23h-6v11H5V20z" />
              </svg>
            </ToolIcon>
            <ToolIcon $ml={31}>
              <svg width="32" height="32" viewBox="0 0 32 32">
                <path d="M3 1h26a3 3 0 0 1 3 3v11c0 10-8 17-16 17S0 25 0 15V4a3 3 0 0 1 3-3z" fill="#4e4e4e" />
                <path d="M8 12l8 8 8-8" fill="none" stroke="#e6e6e6" strokeWidth="4" />
              </svg>
            </ToolIcon>
            <ToolDivider $ml={31} $h={76} />
            <ToolIcon $ml={25}>
              <svg width="32" height="28" viewBox="0 0 32 28" fill="#4e4e4e">
                <rect width="32" height="6" rx="3" />
                <rect y="11" width="32" height="6" rx="3" />
                <rect y="22" width="32" height="6" rx="3" />
              </svg>
            </ToolIcon>
          </ToolIcons>
        </NavToolbar>

        <PageArea>
          <Page>
            <TopBar>
              <FaInstagramSquare size={33} />
              <FaTwitter />
              <FaFacebookF />
            </TopBar>
            <SiteNav>
              <NavItem><FaHome size={24} /> خانه</NavItem>
              <NavItem $gap={18}><FaGraduationCap size={26} /> برای زبان‌آموزان</NavItem>
              <NavItem><FaRegCompass size={24} /> برای همیاران زبان</NavItem>
              <NavItem $active $gap={0}><FaChild size={24} /> حساب کاربری من</NavItem>
              <NavItem><FaQuestionCircle size={24} /> سوالی دارید؟</NavItem>
              <NavItem $accent $gap={0}>زبان سایت: فارسی <FaCaretDown size={24} /></NavItem>
            </SiteNav>
            <Main>
              <Card>
                <CardHeader><CardTitle>Password Reset</CardTitle></CardHeader>
                <CardBody>
                  <FieldRow>
                    <FieldInput type="password" value="1234567" readOnly />
                    <FieldLabel>گذرواژه جدید را وارد کنید:</FieldLabel>
                  </FieldRow>
                  <FieldRow>
                    <FieldInput type="password" value="1234567" readOnly />
                    <FieldLabel>تکرار گذرواژه</FieldLabel>
                  </FieldRow>
                  <SubmitButton>بازنشانی گذرواژه</SubmitButton>
                  <SuccessBox>
                    <svg width="56" height="50" viewBox="0 0 56 50">
                      <defs>
                        <linearGradient id="okGreen" x1="0" y1="0" x2="0" y2="1">
                          <stop offset="0" stopColor="#9ad42c" />
                          <stop offset="1" stopColor="#3f8f14" />
                        </linearGradient>
                      </defs>
                      <ellipse cx="28" cy="46" rx="26" ry="3" fill="#9aaa80" opacity="0.7" />
                      <path d="M1 24L13 18 21 27C28 15 36 7 48 0 44 14 34 32 28 46H19C15 38 9 30 1 24z" fill="url(#okGreen)" />
                    </svg>
                    <span>Success!! The new password has been sent to rayhaneh@gmx.com</span>
                  </SuccessBox>
                  <LoginLink>CLICK HERE TO LOGIN</LoginLink>
                </CardBody>
              </Card>
              <ShareRow>
                <ShareButton $color="#3b5998" $gap={13} $pr={12}>Share <FaFacebookF /></ShareButton>
                <ShareButton $color="#1ec9ff" $gap={15} $icon={30} $pr={15}>Tweet <FaTwitter /></ShareButton>
                <ShareButton $color="#dd4b39" $gap={13} $pr={14}>Share <GooglePlusIcon /></ShareButton>
                <ShareButton $color="#3b729f" $gap={13} $icon={35} $pr={11}>Share <FaLinkedinIn /></ShareButton>
              </ShareRow>
            </Main>
            <PageFooter />
          </Page>
          <Scrollbar><ScrollThumb /></Scrollbar>
        </PageArea>

        <Popup>
          <GhostLogo $x={75} $y={102} $size={75} $sx={0.42}>SPEAKING</GhostLogo>
          <GhostLogo $x={5} $y={195} $size={62} $sx={0.56}>BOOSTER</GhostLogo>
          <PopupClose><FaTimes /></PopupClose>
          <KeyColumn><KeyIcon size={120} /></KeyColumn>
          <PopupContent>
            <PopupHost>fa.speakingbooster.com</PopupHost>
            <PopupMessage>Would you like Firefox to remember this password?</PopupMessage>
            <PopupInput placeholder="No username" readOnly />
            <PopupInput type="password" value="1234567" readOnly />
            <RememberSplit>
              <RememberLabel>Remember</RememberLabel>
              <RememberArrow><FaCaretDown /></RememberArrow>
            </RememberSplit>
          </PopupContent>
        </Popup>
      </BrowserWindow>

      <Dock>
        {dockApps.map((app) => <DockItem key={app.name} app={app} />)}
        <DockDivider />
        {dockFolders.map((app) => <DockItem key={app.name} app={app} />)}
      </Dock>
    </Screen>
  );
}
